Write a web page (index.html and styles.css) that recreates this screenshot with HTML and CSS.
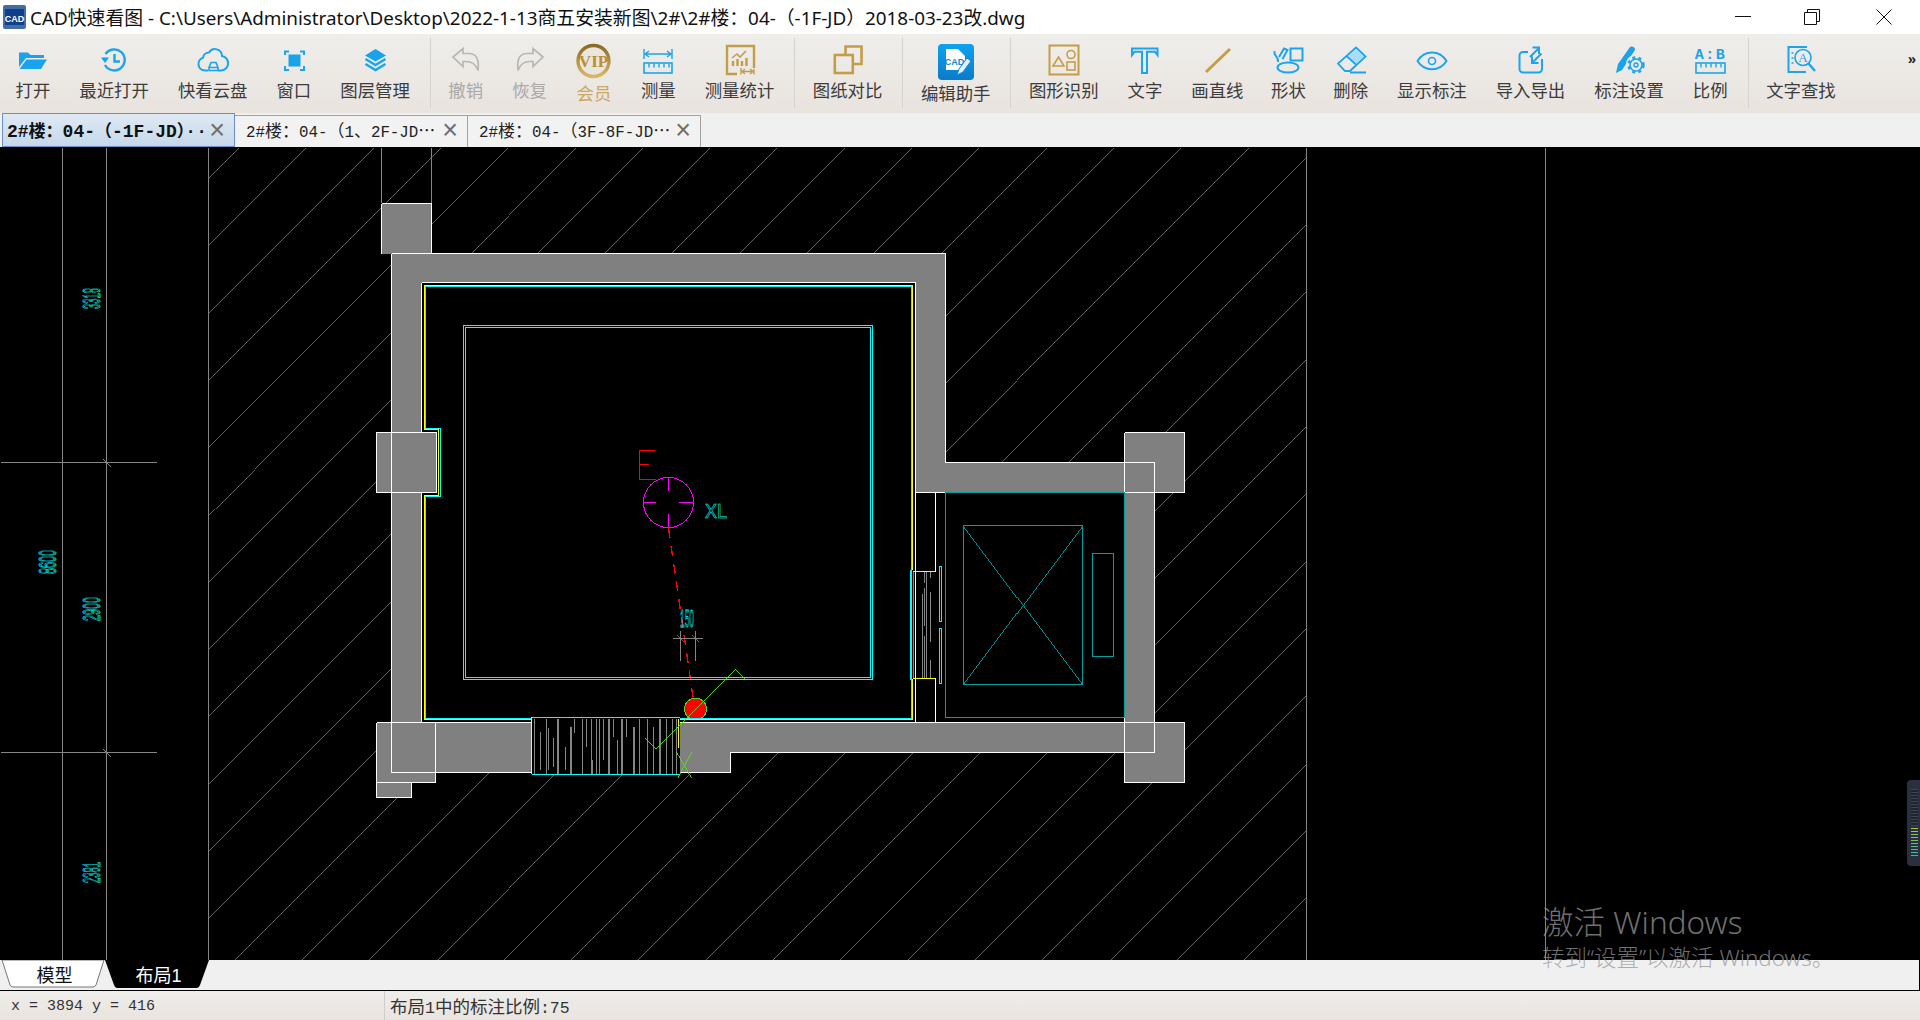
FILE: index.html
```html
<!DOCTYPE html>
<html lang="zh-CN">
<head>
<meta charset="utf-8">
<title>CAD快速看图</title>
<link rel="stylesheet" href="styles.css">
</head>
<body>
<header class="titlebar">
  <svg class="app-icon" viewBox="0 0 23 24"><rect width="23" height="24" rx="2" class="app-bg"/><rect x="2" y="4" width="19" height="16" class="app-in"/><text x="11.5" y="16.5" class="app-tx">CAD</text></svg>
  <span class="title-text">CAD快速看图 - C:\Users\Administrator\Desktop\2022-1-13商五安装新图\2#\2#楼：04-（-1F-JD）2018-03-23改.dwg</span>
  <div class="winctl">
    <svg viewBox="0 0 16 16" class="wc wc-min"><path d="M0 7.5H16"/></svg>
    <svg viewBox="0 0 16 16" class="wc wc-max"><path d="M3.5 3.5V.5H15.5V12.5H12.5M.5 3.5H12.5V15.5H.5Z"/></svg>
    <svg viewBox="0 0 16 16" class="wc wc-close"><path d="M.5.5L15.5 15.5M15.5.5L.5 15.5"/></svg>
  </div>
</header>

<nav class="toolbar">
  <div class="tool"><svg class="ic" viewBox="0 0 32 32"><path class="fb" d="M2 8.5h9l2.5 2.5H27v3H9L2 23z"/><path class="fb" d="M9.5 15.5H30l-6 9.5H2.5z"/></svg><span>打开</span></div>
  <div class="tool"><svg class="ic" viewBox="0 0 32 32"><path class="sb w24" d="M7 21A10.5 10.5 0 1 0 7.5 10"/><path class="fb" d="M3 13.5h8l-4 5.5z"/><path class="sb w24" d="M16.5 10v7.5h5.5"/></svg><span>最近打开</span></div>
  <div class="tool"><svg class="ic" viewBox="0 0 32 32"><path class="sb w2" d="M11 26.500H8a6.500 6.500 0 0 1-2-12.700A6 6 0 0 1 12 8.500 7 7 0 0 1 25 12a7.300 7.300 0 0 1-1 14.500h-3"/><path class="sb w16" d="M12 26.500v-3l2-5h5l2 5v3zM12 23.500h9"/></svg><span>快看云盘</span></div>
  <div class="tool"><svg class="ic" viewBox="0 0 32 32"><path class="sb w2" d="M7 11V7.5h4M22 7.5h4V11M26 22v4h-4M11 26H7v-4"/><rect class="fb" x="10.5" y="10.5" width="12" height="12"/></svg><span>窗口</span></div>
  <div class="tool"><svg class="ic" viewBox="0 0 32 32"><path class="fb" d="M16.5 5L27 11.5 16.5 17.5 6 11.5z"/><path class="sb w24" d="M6.5 15l10 6 10-6M6.5 20l10 6 10-6"/></svg><span>图层管理</span></div>
  <i class="sep"></i>
  <div class="tool off"><svg class="ic" viewBox="0 0 32 32"><path class="sg" d="M3 13L13 4.5V9.5H19C26 9.5 29.500 15 28 26.500C26 20.500 22 17.500 16 17.500H13V22.500Z"/></svg><span>撤销</span></div>
  <div class="tool off"><svg class="ic" viewBox="0 0 32 32"><path class="sg" d="M29 13L19 4.500V9.500H13C6 9.500 2.500 15 4 26.500C6 20.500 10 17.500 16 17.500H19V22.500Z"/></svg><span>恢复</span></div>
  <div class="tool big vip"><svg class="ic" viewBox="0 0 36 36"><defs><linearGradient id="gVip" x1="0" y1="0" x2="0" y2="1"><stop offset="0" stop-color="#8a6a25"/><stop offset="1" stop-color="#d9b765"/></linearGradient></defs><circle class="vip-ring" cx="17.500" cy="17" r="15.500"/><text class="vip-tx" x="17.500" y="22.500">VIP</text></svg><span>会员</span></div>
  <div class="tool"><svg class="ic" viewBox="0 0 32 32"><path class="sb w14" d="M2 5v10M30 5v10M3 10h26M7 7l-4 3 4 3M25 7l4 3-4 3"/><rect class="sb w16" x="2" y="19" width="28" height="10"/><path class="sb w14" d="M7 19.500v4M12 19.500v4M17 19.500v4M22 19.500v4M27 19.500v4"/></svg><span>测量</span></div>
  <div class="tool"><svg class="ic" viewBox="0 0 32 32"><path class="sy w24" d="M13 30H3V2H30V24"/><path class="sy w16" d="M8 14l5-4 3 3 6-6"/><path class="sy w24" d="M9 22v-5M13.500 22v-7M18 22v-5M22.500 22v-8"/><path class="sy w14" d="M17 24v6.500M30 25v5.500M18 27.500h11M21 25l-3 2.500 3 2.500M26 25l3 2.500-3 2.500"/></svg><span>测量统计</span></div>
  <i class="sep"></i>
  <div class="tool"><svg class="ic" viewBox="0 0 32 32"><path class="sy w26" d="M13.500 10V2.500H29.500V20H21.500"/><rect class="sy w26" x="2.800" y="11" width="18" height="18"/></svg><span>图纸对比</span></div>
  <i class="sep"></i>
  <div class="tool big"><svg class="ic" viewBox="0 0 36 36"><defs><linearGradient id="gEdit" x1="0" y1="0" x2="0" y2="1"><stop offset="0" stop-color="#0fa2ee"/><stop offset="1" stop-color="#0a7bcb"/></linearGradient></defs><rect width="36" height="36" rx="4" fill="url(#gEdit)"/><path class="doc" d="M8 5H20L27 12V26H8Z"/><text class="cad-tx" x="16.500" y="21">CAD</text><path class="pen" d="M19 31L21 25 29 14 33 17 25 28Z"/></svg><span>编辑助手</span></div>
  <i class="sep"></i>
  <div class="tool"><svg class="ic" viewBox="0 0 32 32"><rect class="sy w2" x="1.500" y="1.500" width="29" height="29"/><path class="sy w16" d="M10.500 13L16 22H5Z"/><circle class="sy w16" cx="23" cy="10.500" r="4"/><rect class="sy w16" x="19" y="18" width="8" height="8"/></svg><span>图形识别</span></div>
  <div class="tool"><svg class="ic" viewBox="0 0 32 32"><path class="sb w2" d="M3 4.500H28.500V11L26 7.800H18V29H13V7.800H5.500L3 11Z"/></svg><span>文字</span></div>
  <div class="tool"><svg class="ic" viewBox="0 0 32 32"><path class="sy w3" d="M5 28L29 5"/></svg><span>画直线</span></div>
  <div class="tool tight"><svg class="ic" viewBox="0 0 32 32"><rect class="sb w2" x="18.500" y="4.500" width="12" height="12"/><ellipse class="sb w2" cx="16" cy="23.500" rx="10.500" ry="5"/><path class="sb w2" d="M2.500 7C1 12 7 12 6 18M7 13L12 4.500 15.500 6 10.500 15"/></svg><span>形状</span></div>
  <div class="tool"><svg class="ic" viewBox="0 0 32 32"><path class="sb w18" d="M21 3.500L30.500 12.500 15 27H10L3 19.500ZM11.500 12L21.500 21M15 28.500H31"/><path class="fc" d="M21 5L29 12.500 21.500 19.500 13.500 12Z"/></svg><span>删除</span></div>
  <div class="tool"><svg class="ic" viewBox="0 0 32 32"><path class="sb w2" d="M1.500 17C8.500 5.500 23.500 5.500 30.500 17C23.500 28 8.500 28 1.500 17Z"/><circle class="sb w16" cx="16" cy="17" r="3.500"/></svg><span>显示标注</span></div>
  <div class="tool"><svg class="ic" viewBox="0 0 32 32"><path class="sb w2" d="M14 8H9a3.500 3.500 0 0 0-3.500 3.500V25A3.500 3.500 0 0 0 9 28.500H24.500A3.500 3.500 0 0 0 28 25V15"/><path class="sb w2" d="M25 4l-9 9M18.500 3.500h6.500V10M27.500 9.500l-9 9M18 12.500v6.500h6.500"/></svg><span>导入导出</span></div>
  <div class="tool"><svg class="ic" viewBox="0 0 32 32"><path class="fb" d="M3 29L5 20 17 3a3.200 3.200 0 0 1 5 3L18 12a9 9 0 0 0-5 8L9 26Z"/><circle class="sb w16" cx="23" cy="21" r="6"/><circle class="gear" cx="23" cy="21" r="7.500"/><circle class="sb w14" cx="23" cy="21" r="2"/></svg><span>标注设置</span></div>
  <div class="tool"><svg class="ic" viewBox="0 0 32 32"><text class="ab-tx" x="16.500" y="15">A:B</text><rect class="sb w16" x="2" y="19" width="29" height="10"/><path class="sb w14" d="M7 19.500v4M12 19.500v4M17 19.500v4M22 19.500v4M27 19.500v4"/></svg><span>比例</span></div>
  <i class="sep"></i>
  <div class="tool"><svg class="ic" viewBox="0 0 32 32"><path class="sb w2" d="M22 3H3.500V28H21"/><path class="sb w14" d="M6.500 9h2M6.500 14h2M6.500 19h2"/><circle class="sb w16" cx="18" cy="13.500" r="8"/><path class="sb w24" d="M23.500 19.500L30 27"/><text class="a-tx" x="18" y="18">A</text></svg><span>文字查找</span></div>
  <span class="more">»</span>
</nav>

<div class="tabs">
  <div class="tab active"><span class="tab-text"><b class="lat">2#</b>楼：<b class="lat">04-</b>（<b class="lat">-1F-JD</b>）<b class="lat">··</b></span><span class="tab-x">×</span></div>
  <div class="tab"><span class="tab-text"><b class="lat">2#</b>楼：<b class="lat">04-</b>（<b class="lat">1</b>、<b class="lat">2F-JD</b>⋯</span><span class="tab-x">×</span></div>
  <div class="tab"><span class="tab-text"><b class="lat">2#</b>楼：<b class="lat">04-</b>（<b class="lat">3F-8F-JD</b>⋯</span><span class="tab-x">×</span></div>
</div>

<main class="canvas">
  <svg class="drawing" viewBox="0 147 1920 813" width="1920" height="813">
    <defs><clipPath id="hatchClip"><rect x="208" y="148" width="1098" height="812"/></clipPath></defs>
    <g class="cad">
      <path class="ln-g thin" clip-path="url(#hatchClip)" d="M-573 960l813-813M-505.700 960l813-813M-438.400 960l813-813M-371.100 960l813-813M-303.800 960l813-813M-236.500 960l813-813M-169.200 960l813-813M-101.900 960l813-813M-34.600 960l813-813M32.700 960l813-813M100 960l813-813M167.300 960l813-813M234.600 960l813-813M301.900 960l813-813M369.200 960l813-813M436.500 960l813-813M503.800 960l813-813M571.100 960l813-813M638.400 960l813-813M705.700 960l813-813M773 960l813-813M840.300 960l813-813M907.600 960l813-813M974.900 960l813-813M1042.200 960l813-813M1109.500 960l813-813M1176.800 960l813-813M1244.100 960l813-813"/>
      <path class="ln-g" d="M62.500 148V960M106.500 148V960M208.500 148V960M1306.500 148V960M1545.500 148V960M1 462.500H157M1 752.500H157M103 459l8 8M103 749l8 8M381.500 148V203M431.500 148V203"/>

      <polygon class="wall" points="391.500,253.500 945.500,253.500 945.500,462.500 1124.500,462.500 1124.500,432.500 1184.500,432.500 1184.500,492.500 1154.500,492.500 1154.500,722.500 1184.500,722.500 1184.500,782.500 1124.500,782.500 1124.500,752.500 730.500,752.500 730.500,772.500 435.500,772.500 435.500,782.500 411.500,782.500 411.500,797.500 376.500,797.500 376.500,722.500 391.500,722.500 391.500,492.500 376.500,492.500 376.500,432.500 391.500,432.500"/>
      <rect class="wall" x="381.500" y="203.500" width="50" height="50"/>
      <polygon class="void" points="421.500,282.500 915.500,282.500 915.500,492.500 1124.500,492.500 1124.500,722.500 421.500,722.500"/>
      <rect class="wall" x="376.500" y="432.500" width="60" height="60"/>
      <rect class="void" x="531.500" y="717.500" width="148.500" height="57"/>

      <path class="ln-w" d="M391.500 253.500H945.500V462.500H1154.500V752.500H730.500V772.500H680M391.500 253.500V772.500H531M421.500 282.500H915.500V722.500M421.500 282.500V432.500M421.500 492.500V722.500M376.500 722.500H531M680 722.500H1184.500M915.500 492.500H1184.500M1124.500 432.500H1184.500V492.500M1124.500 432.500V782.500H1184.500V722.500M376.500 722.500V797.500H411.500V782.500H435.500V722.500M376.500 782.500H411.500M935.500 492.500V571M935.500 679V722.500M381.500 203.500H431.500V253.500M381.500 203.500V253.500M376.500 432.500H436.500V492.500H376.500Z"/>

      <path class="ln-g" d="M534.500 719V774M540.500 732V770M546.500 719V774M548.500 728V770M553.500 738V767M557.500 719V774M558.500 719V774M565.500 747V770M570.500 727V774M571.500 727V774M574.500 719V733M582.500 719V774M586.500 719V747M591.500 719V774M592.500 760V774M596.500 719V774M599.500 719V774M603.500 719V760M608.500 719V774M609.500 719V774M613.500 719V737M617.500 740V774M621.500 719V774M622.500 719V774M626.500 719V737M633.500 727V774M634.500 727V774M639.500 719V774M647.500 719V774M653.500 727V774M659.500 719V774M660.500 719V774M666.500 719V774M672.500 719V774M676.500 719V774"/>
      <path class="ln-g" d="M913.500 572V678M922.500 594V678M924.500 572V583M924.500 588V626M924.500 636V678M926.500 572V678M930.500 572V578M930.500 592V642M930.500 660V678"/>

      <path class="ln-r dash" d="M668.500 528L693 697"/>
      <circle class="bulb" cx="695.500" cy="709" r="11"/>
      <path class="ln-y" d="M912.500 570V285.500H424.500V429.500H438.500V495.500H424.500V719.500H531.500M680 719.500H912.500V679M531.500 717V774M678.500 719V748M913 571.500H936M913 678.500H936"/>
      <path class="ln-c" d="M911.500 570V286.500H425.500V428.500H440.500V496.500H425.500V718.500H531.500M680 718.500H911.500V680M531.500 717.500H680M531.500 774.500H680M911.500 570V680M910.500 570V680M463.500 325.500H872.500V679.500H463.500ZM465.500 327.500H870.500V677.500H465.500ZM939.500 566.500H941.500V621.500H939.500ZM939.500 628.500H941.500V683.500H939.500Z"/>
      <path class="ln-t" d="M945.500 492.500H1124.500V717.500H945.500ZM963.500 525.500H1082.500V684.500H963.500ZM1092.500 553.500H1113.500V656.500H1092.500Z"/>
      <path class="ln-t mid" d="M963.500 525.500L1082.500 684.500M1082.500 525.500L963.500 684.500"/>
      <path class="ln-l mid" d="M645.700 738.300L656 749 735.700 669.300 745 679M676.700 752.300L691.700 778.300M691.700 752.300L677.700 778.300"/>
      <path class="ln-g" d="M673 638.500H703M680.500 631V661M695.500 631V661"/>
      <path class="ln-g thin" d="M677 635l7 7M692 635l7 7"/>
      <path class="ln-r" d="M639.500 479.500V450.500H655M639.500 464.500H649M639.500 479.500H656"/>
      <circle class="ln-m" cx="668.500" cy="502.500" r="25"/>
      <path class="ln-m" d="M668.500 477.500V491M668.500 514V527.500M643.500 502.500H656M679 502.500H693"/>
    </g>
    <text class="cad-text xl" x="705" y="518" textLength="22" lengthAdjust="spacingAndGlyphs">XL</text>
    <text class="cad-text dim" x="680" y="626.500" textLength="14" lengthAdjust="spacingAndGlyphs">150</text>
    <text class="cad-text dim" transform="translate(100 309) rotate(-90)" textLength="21" lengthAdjust="spacingAndGlyphs">3318</text>
    <text class="cad-text dim" transform="translate(56 574) rotate(-90)" textLength="24" lengthAdjust="spacingAndGlyphs">8600</text>
    <text class="cad-text dim" transform="translate(100 621) rotate(-90)" textLength="24" lengthAdjust="spacingAndGlyphs">2900</text>
    <text class="cad-text dim" transform="translate(100 883) rotate(-90)" textLength="21" lengthAdjust="spacingAndGlyphs">2381</text>
  </svg>
  <div class="meter"><i class="m-off"></i><i class="m-on"></i></div>
</main>

<div class="sheets">
  <div class="sheet model"><svg class="sheet-bg" viewBox="0 0 104 28"><path d="M1 0H103L95 25Q94 27 92 27H12Q10 27 9 25Z"/></svg><span>模型</span></div>
  <div class="sheet layout"><svg class="sheet-bg" viewBox="0 0 104 28"><path d="M0 0H104L95 25Q94 28 92 28H12Q10 28 9 25Z"/></svg><span>布局<b class="num">1</b></span></div>
</div>

<footer class="status">
  <span class="coords">x = 3894 y = 416</span>
  <span class="scale">布局<b class="lat">1</b>中的标注比例<b class="lat">:75</b></span>
</footer>

<aside class="activate"><p class="a1">激活 Windows</p><p class="a2">转到“设置”以激活 Windows。</p></aside>
</body>
</html>
```

FILE: styles.css
```css
* { box-sizing: border-box; }
html, body { margin: 0; padding: 0; }
body {
  width: 1920px; height: 1020px; overflow: hidden; position: relative;
  display: flex; flex-direction: column;
  background: #f0f0f0; color: #333;
  font-family: "Noto Sans CJK SC", "Liberation Sans", sans-serif;
}

/* title bar */
.titlebar { height: 34px; flex: none; background: #fff; display: flex; align-items: center; padding-left: 3px; }
.app-icon { width: 23px; height: 24px; flex: none; }
.app-bg { fill: #3f6ea8; }
.app-in { fill: #123f8a; }
.app-tx { fill: #fff; font: bold 9px "Liberation Sans", sans-serif; text-anchor: middle; }
.title-text { margin-left: 4px; font: 18.85px "Noto Sans", "Noto Sans CJK SC", sans-serif; color: #111; white-space: nowrap; }
.winctl { margin-left: auto; display: flex; align-items: center; padding-right: 28px; }
.wc { width: 16px; height: 16px; display: block; fill: none; stroke: #111; stroke-width: 1; }
.wc-max { margin: 0 56px 0 53px; }

/* toolbar */
.toolbar {
  height: 79px; flex: none; display: flex; align-items: flex-start; padding-left: 1px; position: relative;
  background: linear-gradient(#efeeeb, #e9e3de);
}
.tool { padding: 10px 14.5px 0; display: flex; flex-direction: column; align-items: center; gap: 4px; font-size: 17.4px; line-height: 20px; color: #3c3c3c; white-space: nowrap; }
.tool.tight { padding-left: 13px; padding-right: 13px; }
.tool.big { gap: 3px; }
.tool.off { color: #a9a9a9; }
.tool.vip { color: #c9a862; }
.ic { width: 32px; height: 32px; display: block; flex: none; overflow: visible; }
.tool.big .ic { width: 36px; height: 36px; }
.sep { width: 1px; height: 70px; margin: 4px 3px 0 5.5px; background: #d5d3d0; flex: none; }
.more { position: absolute; right: 4px; top: 16px; font: bold 15px "Liberation Sans", sans-serif; color: #222; }

.fb { fill: #18a3ec; }
.fc { fill: #a9dcf6; }
.sb { fill: none; stroke: #1ba5ec; }
.sy { fill: none; stroke: #c49d49; }
.sg { fill: none; stroke: #b7b7b7; stroke-width: 1.7; }
.w14 { stroke-width: 1.4; }
.w16 { stroke-width: 1.6; }
.w18 { stroke-width: 1.8; }
.w2 { stroke-width: 2; }
.w24 { stroke-width: 2.4; }
.w26 { stroke-width: 2.6; }
.w3 { stroke-width: 3; }
.vip-ring { fill: #e9e6e0; stroke: url(#gVip); stroke-width: 3.4; }
.vip-tx { fill: #b98f35; font: bold 17px "Liberation Serif", serif; text-anchor: middle; }
.doc { fill: #fff; }
.cad-tx { fill: #0e88d8; font: bold 9px "Liberation Sans", sans-serif; text-anchor: middle; }
.pen { fill: #dff1fc; stroke: #0e88d8; stroke-width: 1; }
.ab-tx { fill: #18a3ec; font: bold 15px "Liberation Mono", monospace; text-anchor: middle; letter-spacing: 1.5px; }
.a-tx { fill: #1ba5ec; font: 13px "Liberation Serif", serif; text-anchor: middle; }
.gear { fill: none; stroke: #1ba5ec; stroke-width: 2.4; stroke-dasharray: 3 3.280; }

/* document tabs */
.tabs { height: 34px; flex: none; display: flex; align-items: flex-end; padding-left: 2px; background: #f0f0f0; }
.tab {
  width: 233px; height: 32px; display: flex; align-items: center; justify-content: space-between;
  padding: 0 9px 3px 11px; border: 1px solid #a3a3a3; border-left: 0; border-bottom: 0;
  background: #f2f2f2; font-size: 17px; line-height: 28px; color: #222;
}
.tab.active {
  height: 34px; padding: 0 9px 1px 4px; font-weight: bold; color: #111;
  border: 1px solid #6a8fc6; background: linear-gradient(#dfe9f4, #c5d8ea);
}
.tab-text { white-space: nowrap; overflow: hidden; }
.lat { font: normal 15.8px "Liberation Mono", monospace; }
.active .lat { font-weight: bold; font-size: 18px; }
.tab-x { font: 27px/28px "Liberation Sans", sans-serif; color: #6f6f6f; }

/* drawing */
.canvas { height: 813px; flex: none; background: #000; position: relative; overflow: hidden; }
.drawing { display: block; }
.cad { shape-rendering: crispEdges; }
.cad path, .cad circle { fill: none; stroke-width: 1; }
.cad .thin { stroke-width: .72; }
.cad .mid { stroke-width: .9; }
.ln-g { stroke: #858585; }
.ln-w { stroke: #fff; }
.ln-y { stroke: #ff0; }
.ln-c { stroke: #0ff; }
.ln-t { stroke: #00a0a0; }
.ln-r { stroke: #f00; }
.ln-m { stroke: #f0f; }
.ln-l { stroke: #58e01c; }
.dash { stroke-dasharray: 10 8; stroke-width: 1.4 !important; }
.wall { fill: #808080; }
.void { fill: #000; }
.cad circle.bulb { fill: #f00; stroke: #47e01c; }
.cad-text { font-family: "Liberation Sans", sans-serif; fill: none; stroke: #0ff; }
.xl { font-size: 21px; stroke-width: .6; }
.dim { font-size: 23px; stroke-width: .8; }
.meter {
  position: absolute; right: 0; top: 633px; width: 13px; height: 86px; padding: 9px 2px 10px 4px;
  background: #2a3040; border-radius: 4px 0 0 4px; display: flex; flex-direction: column; gap: 2px;
}
.m-off { height: 38px; background: repeating-linear-gradient(#3e4452 0 1px, #1f2430 1px 3px); }
.m-on { height: 29px; background: repeating-linear-gradient(transparent 0 1px, #2a3040 1px 3px), linear-gradient(#a8c83a, #2ac0a0); }

/* sheet tabs */
.sheets { height: 31px; flex: none; display: flex; background: #f0f0f0; border-bottom: 1px solid #000; border-right: 1px solid #000; padding-left: 1px; }
.sheet { width: 104px; height: 28px; position: relative; display: flex; align-items: center; justify-content: center; padding-left: 3px; font-size: 18px; line-height: 28px; }
.sheet span { position: relative; }
.sheet-bg { position: absolute; inset: 0; width: 104px; height: 28px; }
.model .sheet-bg path { fill: #fff; stroke: #777; stroke-width: 1; }
.model { color: #111; }
.layout .sheet-bg path { fill: #000; }
.layout { color: #fff; }
.num { font: normal 18px "Liberation Sans", sans-serif; }

/* status bar */
.status { height: 29px; flex: none; display: flex; align-items: center; background: linear-gradient(#efeeeb, #e9e3de); color: #333; }
.coords { width: 385px; padding: 2px 0 0 11px; font: 15px/27px "Liberation Mono", monospace; border-right: 1px solid #cfcdca; height: 29px; }
.scale { margin-left: 5px; font-size: 17.5px; line-height: 29px; }
.scale .lat { font-size: 16.5px; }

/* activation watermark */
.activate { position: absolute; left: 1542px; top: 900px; color: rgba(150,150,150,.75); pointer-events: none; }
.activate p { margin: 0; white-space: nowrap; font-family: "Noto Sans", "Noto Sans CJK SC", sans-serif; font-weight: 300; }
.a1 { font-size: 31.5px; line-height: 44px; }
.a2 { font-size: 22.5px; line-height: 28px; }
```
